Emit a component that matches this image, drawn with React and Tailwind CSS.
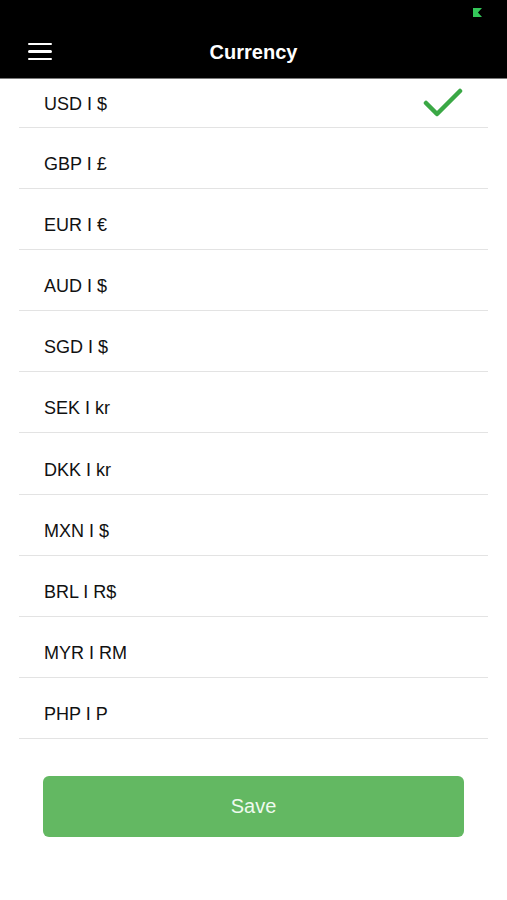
import React from 'react';

const currencies = [
  'USD I $',
  'GBP I £',
  'EUR I €',
  'AUD I $',
  'SGD I $',
  'SEK I kr',
  'DKK I kr',
  'MXN I $',
  'BRL I R$',
  'MYR I RM',
  'PHP I P',
];

export default function App() {
  const selected = 0;

  return (
    <div className="w-[507px] h-[900px] bg-white overflow-hidden font-['Liberation_Sans',Arial,sans-serif]">
      {/* header */}
      <div className="relative h-[79px] bg-black border-b border-[#7a7a7a]">
        <div className="absolute right-[25px] top-[8px] w-[9px] h-[9px] bg-[#34c759] [clip-path:polygon(0_0,100%_0,55%_50%,100%_100%,0_100%)]" />
        <div className="flex items-center h-full pt-[25px] px-[28px]">
          <div className="flex flex-col gap-[5px] w-[24px]">
            <span className="block h-[2.5px] bg-white rounded" />
            <span className="block h-[2.5px] bg-white rounded" />
            <span className="block h-[2.5px] bg-white rounded" />
          </div>
          <div className="flex-1 text-center text-white text-[20px] font-semibold pr-[24px]">Currency</div>
        </div>
      </div>

      {/* list */}
      <div className="mx-[19px]">
        {currencies.map((c, i) => (
          <div
            key={c}
            className={`flex items-center justify-between border-b border-[#e3e3e3] pl-[25px] pr-[25px] ${
              i === 0 ? 'h-[49px] pt-[2px]' : 'h-[61.1px] pt-[13px]'
            }`}
          >
            <span className="text-[18px] text-[#111]">{c}</span>
            {i === selected && (
              <svg width="40" height="30" viewBox="0 0 40 30" className="-mt-[2px]">
                <path d="M3 15 L14 26 L37 3" fill="none" stroke="#3aa845" strokeWidth="4.5" strokeLinecap="round" strokeLinejoin="round" />
              </svg>
            )}
          </div>
        ))}
      </div>

      {/* save */}
      <div className="px-[43px] pt-[37px]">
        <button className="w-full h-[61px] rounded-[6px] bg-[#63b862] text-[20px] text-[#eefaee]">Save</button>
      </div>
    </div>
  );
}
